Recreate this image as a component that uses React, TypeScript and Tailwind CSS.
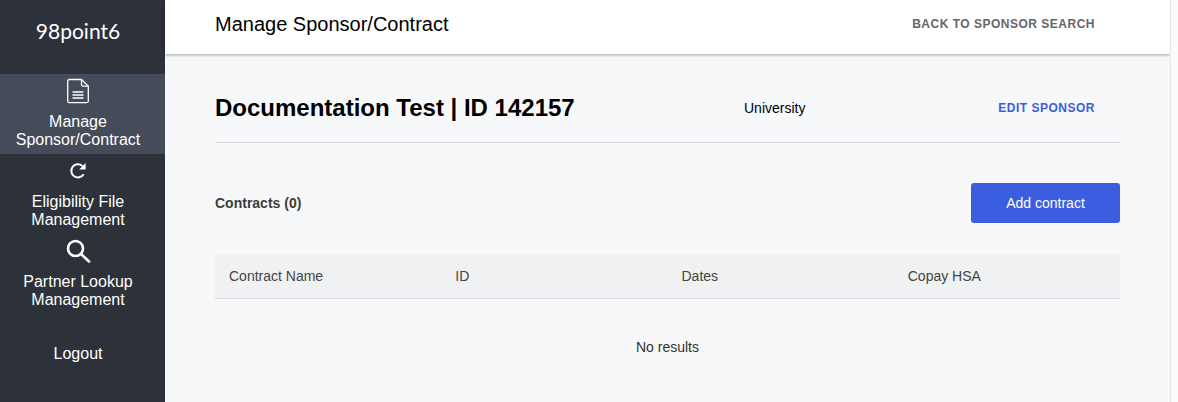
import React from "react";

function DocIcon() {
  return (
    <svg width="24" height="26" viewBox="0 0 24 26" fill="none" stroke="#fff" strokeWidth="1.3" strokeLinejoin="round">
      <path d="M1.7 3a1.5 1.5 0 0 1 1.5-1.5h12.3l6.8 6.6v15a1.5 1.5 0 0 1-1.5 1.5H3.2a1.5 1.5 0 0 1-1.5-1.5z" />
      <path d="M15.5 1.5v5a1.5 1.5 0 0 0 1.5 1.6h5.3" />
      <path d="M6.5 14h11M6.5 17h11M6.5 20h11" strokeWidth="1.4" />
    </svg>
  );
}

function RefreshIcon() {
  return (
    <svg width="18" height="18" viewBox="0 0 18 18" fill="none" stroke="#fff" strokeWidth="2">
      <path d="M14.6 12.2A6.6 6.6 0 1 1 13.4 4" />
      <path d="M16.6 1v6.4h-6.4z" fill="#fff" stroke="none" />
    </svg>
  );
}

function SearchIcon() {
  return (
    <svg width="26" height="26" viewBox="0 0 26 26" fill="none" stroke="#fff" strokeWidth="2.6" strokeLinecap="round">
      <circle cx="10.5" cy="10.5" r="7.5" />
      <path d="M16 16l8 7.5" />
    </svg>
  );
}

export default function App() {
  return (
    <div className="flex h-[402px] w-[1178px] overflow-hidden bg-[#f7f8fa] font-['Liberation_Sans',Arial,sans-serif]">
      <aside className="flex w-[165px] shrink-0 flex-col bg-[#2d3139] text-center text-white">
        <div className="flex h-[74px] items-start justify-center pr-[9px] pt-[14px] font-['Lato',sans-serif] text-[21px] font-normal leading-[34px]">
          98point6
        </div>
        <div className="flex h-[80px] flex-col items-center bg-[#454c59] pr-[9px] pt-[4px] text-[16px] leading-[18px]">
          <DocIcon />
          <div className="mt-[9px]">Manage<br />Sponsor/Contract</div>
        </div>
        <div className="flex h-[84px] flex-col items-center pr-[9px] pt-[8px] text-[16px] leading-[18px]">
          <RefreshIcon />
          <div className="mt-[13px]">Eligibility File<br />Management</div>
        </div>
        <div className="flex flex-col items-center pr-[9px] text-[16px] leading-[18px]">
          <SearchIcon />
          <div className="mt-[9px]">Partner Lookup<br />Management</div>
        </div>
        <div className="mt-[36px] pr-[9px] text-[16px] leading-[18px]">Logout</div>
      </aside>

      <main className="flex w-[1005px] shrink-0 flex-col">
        <header className="flex h-[54px] shrink-0 items-center justify-between bg-white pb-[6px] pl-[50px] pr-[75px] shadow-[0_1px_3px_rgba(0,0,0,0.35)]">
          <h1 className="text-[20px] leading-6 text-black">Manage Sponsor/Contract</h1>
          <a className="text-[12px] font-bold tracking-[0.5px] text-[#666666]">BACK TO SPONSOR SEARCH</a>
        </header>

        <div className="flex flex-col pl-[50px] pr-[50px]">
          <div className="relative flex h-[89px] items-center justify-between border-b border-[#d8d9dd] pr-[25px] pt-[19px]">
            <h2 className="text-[24px] font-bold leading-8 text-black">Documentation Test | ID 142157</h2>
            <span className="absolute left-[529px] top-[44px] text-[14px] text-black">University</span>
            <a className="text-[12px] font-bold tracking-[0.5px] text-[#3b5de0]">EDIT SPONSOR</a>
          </div>

          <div className="mt-[40px] flex items-center justify-between">
            <span className="text-[14px] font-bold text-[#3d3d3d]">Contracts (0)</span>
            <button className="h-[40px] w-[149px] rounded-[3px] bg-[#3b5de0] text-[14px] text-white">Add contract</button>
          </div>

          <div className="mt-[31px] grid h-[45px] grid-cols-4 items-center border-b border-[#d8d9dd] bg-[#f0f1f3] text-[14px] text-[#444444]">
            <span className="pl-[14px]">Contract Name</span>
            <span className="pl-[14px]">ID</span>
            <span className="pl-[14px]">Dates</span>
            <span className="pl-[14px]">Copay HSA</span>
          </div>

          <div className="mt-[38px] text-center text-[14px] text-[#333333]">No results</div>
        </div>
      </main>

      <div className="w-[8px] shrink-0 border-l border-[#e6e6e6] bg-[#fbfbfb]" />
    </div>
  );
}
